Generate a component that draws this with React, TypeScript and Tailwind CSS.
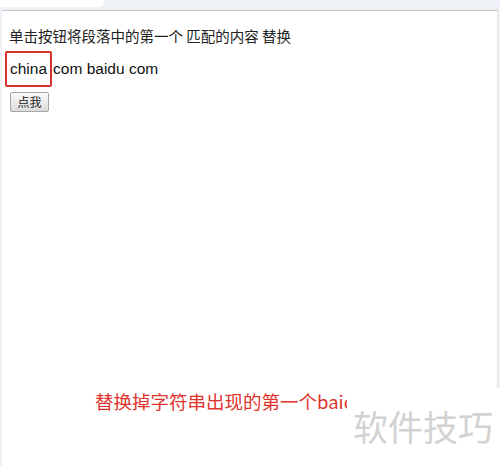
export default function App() {
  return (
    <div className="relative w-[500px] h-[466px] bg-[#eef1f5] flex flex-col overflow-hidden" style={{ fontFamily: '"Noto Sans CJK SC", sans-serif' }}>
      {/* top strip with tab */}
      <div className="h-[10px] flex">
        <div className="w-[104px] h-[7px] bg-white rounded-br-[6px]" />
      </div>

      {/* page area */}
      <div className="flex-1 ml-[2px] mr-[2px] bg-white border-t border-[#c9c9c9] border-r border-r-[#e2e4e8] pl-[7px] pt-[15px]">
        <p className="text-[14.5px] leading-[20px] text-[#222]">单击按钮将段落中的第一个 匹配的内容 替换</p>

        <p className="mt-[5px] text-[15.5px] leading-[24px] text-[#111] flex items-center" style={{ fontFamily: '"Liberation Sans", sans-serif' }}>
          <span className="-ml-[4px] mr-[1px] px-[3px] py-[4px] border-2 border-[#d8322d] rounded-[2px]">china</span>
          <span>com baidu com</span>
        </p>

        <button className="mt-[5px] ml-[1px] w-[39px] h-[20px] text-[12px] leading-none text-[#222] border border-[#a6a6a6] rounded-[2px] bg-gradient-to-b from-[#fafafa] to-[#dcdcdc]">
          点我
        </button>

        <div className="mt-[278px] ml-[86px] text-[18.5px] leading-[22px] text-[#e0332e] whitespace-nowrap">
          替换掉字符串出现的第一个baidu
        </div>
      </div>

      {/* watermark */}
      <div className="absolute right-0 bottom-0 w-[153px] h-[78px] bg-white">
        <div className="mt-[18px] ml-[6px] text-[35px] leading-[40px] text-[#d2d2d2]">软件技巧</div>
      </div>
    </div>
  )
}
